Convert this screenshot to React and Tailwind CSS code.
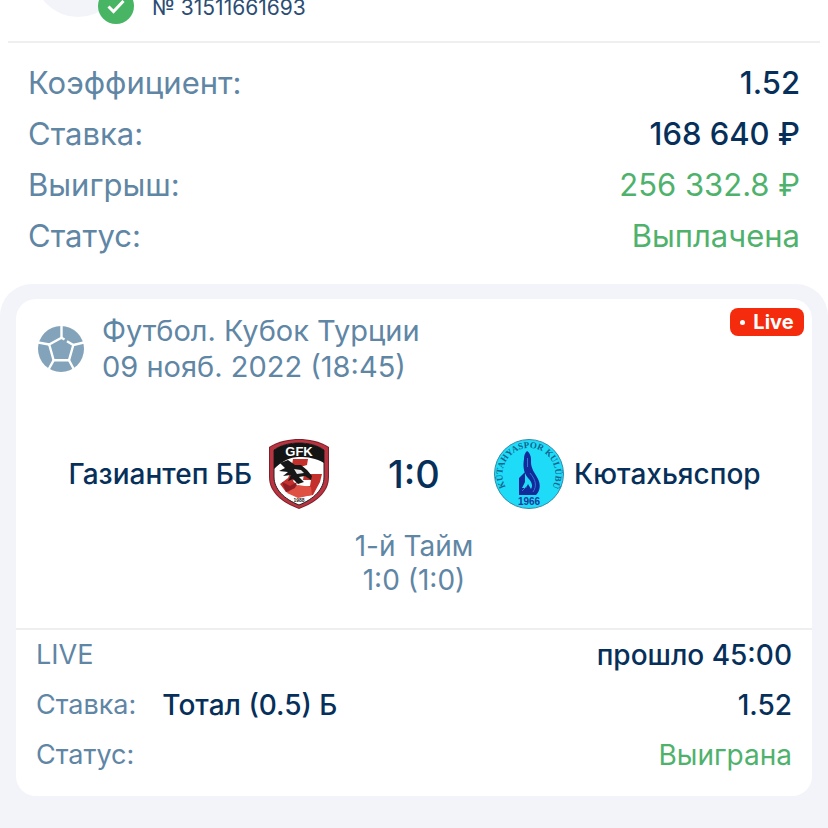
import React from 'react';

const summary = [
  { label: 'Коэффициент:', value: '1.52', tone: 'font-medium text-[#06305a]' },
  { label: 'Ставка:', value: '168 640 ₽', tone: 'font-medium text-[#06305a]' },
  { label: 'Выигрыш:', value: '256 332.8 ₽', tone: 'text-[#4fb26c]' },
  { label: 'Статус:', value: 'Выплачена', tone: 'text-[#4fb26c]' },
];

function CheckBadge() {
  return (
    <svg viewBox="0 0 36 36" className="absolute right-[-12px] bottom-[-7px] size-9" aria-hidden="true">
      <circle cx="18" cy="18" r="18" fill="#48b565" />
      <path d="M10.5 18.5l5 5 10-10.5" fill="none" stroke="#fff" strokeWidth="3" />
    </svg>
  );
}

function BallIcon() {
  return (
    <svg viewBox="0 0 46 46" className="size-[46px] shrink-0" aria-hidden="true">
      <circle cx="23" cy="23" r="23" fill="#83a3bb" />
      <g fill="none" stroke="#fff" strokeWidth="2.4">
        <path d="M26.5 13.5L23.5 11.8L11.2 18.5L15.6 34.3H31L35.3 19L29 15.2" strokeLinejoin="round" />
        <path d="M23.5 12V0M11.2 18.5L0 16.5M35.3 19L46 16.5M15.6 34.3L10.5 43.5M31 34.3L36 43.5" />
      </g>
    </svg>
  );
}

function GfkCrest() {
  return (
    <svg viewBox="0 0 70 72" className="h-[72px] w-[70px] shrink-0" role="img" aria-label="GFK">
      <path d="M35 1C44 1 56 3 65 9V39C65 55 51 65 35 71C19 65 5 55 5 39V9C14 3 26 1 35 1Z" fill="#7d2029" />
      <path d="M35 2C44 2 55 4 64 9.500V39C64 54 51 64 35 70C19 64 6 54 6 39V9.500C15 4 26 2 35 2Z" fill="#b93440" />
      <path d="M35 5C44 5 53 7 60 12V39C60 51 50 61 35 67C20 61 10 51 10 39V12C17 7 26 5 35 5Z" fill="#fff" stroke="#222" strokeWidth="1" />
      <path d="M35 5C44 5 53 7 60 12V25C52 20 44 19 35 19C26 19 18 23 10 31V12C17 7 26 5 35 5Z" fill="#141414" />
      <path d="M29 21L44 21L43 27L36 29L32 38L29 43L35 49L46 48L47 42L39 42L40 36L58 36L56 44L49 57L34 59L22 54L16 46L24 40L27 33Z" fill="#c4302c" />
      <path d="M23 55L34 47L47 49L48 57L34 60Z" fill="#df5143" />
      <path d="M18 44L26 48L33 44L31 50L22 54Z" fill="#8e1d24" />
      <path d="M16 25L24 22L31 27L37 27L43 32L48 38L47 42L41 38L35 39L40 44L34 46L29 41L24 43L27 37L19 38L24 34L15 33L21 30Z" fill="#171718" />
      <path d="M30 31L37 32L40 35L33 36Z" fill="#e8e8e8" />
      <text x="35" y="18" textAnchor="middle" fill="#fff" fontSize="13" fontWeight="700" fontFamily="Liberation Sans, Arial, sans-serif">GFK</text>
      <text x="35" y="64" textAnchor="middle" fill="#222" fontSize="5" fontWeight="700" fontFamily="Liberation Sans, Arial, sans-serif">1988</text>
    </svg>
  );
}

function KutahyaCrest() {
  return (
    <svg viewBox="0 0 70 70" className="size-[70px] shrink-0" role="img" aria-label="Kütahyaspor Kulübü">
      <defs>
        <path id="crest-ring" d="M16 54A26.500 26.500 0 1 1 54 54" />
      </defs>
      <circle cx="35" cy="35" r="34.5" fill="#1edcf8" stroke="#3488a8" strokeWidth="1" />
      <text fill="#12638f" fontSize="9" fontWeight="700" fontFamily="Liberation Serif, Times New Roman, serif">
        <textPath href="#crest-ring" startOffset="50%" textAnchor="middle">KÜTAHYASPOR KULÜBÜ</textPath>
      </text>
      <path d="M33 12C36 14 37.500 18 37 23C37 30 41 34 44 40C47 46 46 52 42 56H25V39L31 33V43L28 49H32L34 45L37 50C39 47 38 43 34 39C29 33 29 26 30 20C30 16 31 14 33 12Z" fill="#132a9b" />
      <path d="M33.500 19V28M36 34C42 41 43 47 39 53M28 52L33 47" stroke="#2b7ad0" strokeWidth="1" fill="none" />
      <text x="35" y="66" textAnchor="middle" fill="#143a9d" fontSize="10" fontWeight="700" fontFamily="Liberation Sans, Arial, sans-serif">1966</text>
    </svg>
  );
}

export default function App() {
  return (
    <main className="flex min-h-screen flex-col overflow-hidden bg-white font-['Inter','Noto_Sans',sans-serif] text-[#5f86a5]">
      <header className="mx-2 flex h-[43px] items-end border-b-2 border-[#eeeff1] pb-6 pl-[26px]">
        <div className="relative size-[88px] shrink-0 rounded-full bg-[#f3f4fa]">
          <CheckBadge />
        </div>
        <p className="ml-[30px] text-[21px] leading-[18px] text-[#2b4d74]">№ 31511661693</p>
      </header>

      <dl className="px-7 pt-[14px] pb-[23px] text-[31px] leading-[51px]">
        {summary.map((row) => (
          <div key={row.label} className="flex justify-between">
            <dt>{row.label}</dt>
            <dd className={row.tone}>{row.value}</dd>
          </div>
        ))}
      </dl>

      <section className="grow rounded-t-[32px] bg-[#f3f4fa] px-4 pt-[15px] pb-8">
        <article className="relative rounded-[20px] bg-white pb-4">
          <div className="absolute top-[9px] right-2 flex h-7 w-[74px] items-center justify-center gap-2 rounded-lg bg-[#f42c0d] text-[20px] font-bold text-white">
            <span className="size-[5px] rounded-full bg-white" />
            Live
          </div>

          <div className="flex items-center gap-[18px] px-[22px] pt-[14px] text-[29px] leading-9">
            <BallIcon />
            <div>
              <h1>Футбол. Кубок Турции</h1>
              <p>09 нояб. 2022 (18:45)</p>
            </div>
          </div>

          <div className="mt-[53px] grid grid-cols-[1fr_160px_1fr] items-center text-[28px] font-medium text-[#06305a]">
            <div className="flex items-center justify-end gap-3">
              <span>Газиантеп ББ</span>
              <GfkCrest />
            </div>
            <strong className="text-center text-[38px] font-medium">1:0</strong>
            <div className="flex items-center gap-[10px]">
              <KutahyaCrest />
              <span>Кютахьяспор</span>
            </div>
          </div>

          <div className="mt-[19px] pb-[31px] text-center text-[28px] leading-[34px]">
            <p>1-й Тайм</p>
            <p>1:0 (1:0)</p>
          </div>

          <div className="border-t-2 border-[#eeeff1] px-5 text-[28px] leading-[50px]">
            <div className="flex justify-between">
              <span className="text-[27px]">LIVE</span>
              <span className="font-medium text-[#06305a]">прошло 45:00</span>
            </div>
            <div className="flex">
              <span className="text-[27px]">Ставка:</span>
              <span className="ml-[26px] font-medium text-[#06305a]">Тотал (0.5) Б</span>
              <span className="ml-auto font-medium text-[#06305a]">1.52</span>
            </div>
            <div className="flex justify-between">
              <span className="text-[27px]">Статус:</span>
              <span className="text-[#4fb26c]">Выиграна</span>
            </div>
          </div>
        </article>
      </section>
    </main>
  );
}
